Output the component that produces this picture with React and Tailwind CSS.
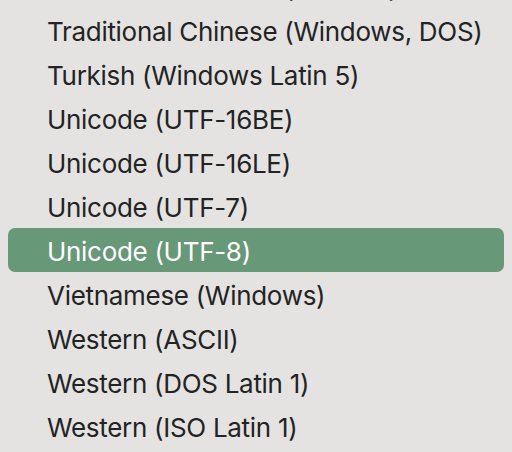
import React from 'react';

const items = [
  'Traditional Chinese (Mac OS)',
  'Traditional Chinese (Windows, DOS)',
  'Turkish (Windows Latin 5)',
  'Unicode (UTF-16BE)',
  'Unicode (UTF-16LE)',
  'Unicode (UTF-7)',
  'Unicode (UTF-8)',
  'Vietnamese (Windows)',
  'Western (ASCII)',
  'Western (DOS Latin 1)',
  'Western (ISO Latin 1)',
];

const selected = 'Unicode (UTF-8)';

export default function App() {
  return (
    <div
      className="h-[452px] w-[512px] overflow-hidden bg-[#e4e3e2]"
      style={{ fontFamily: 'Inter, "Noto Sans", sans-serif' }}
    >
      <div className="-mt-[36px] flex flex-col px-[8px]">
        {items.map((label) => {
          const active = label === selected;
          return (
            <div
              key={label}
              className={
                active
                  ? 'flex h-[44px] items-center rounded-[7px] bg-[#679877] pl-[39px] pt-[3px] text-[26px] leading-none tracking-[-0.3px] text-white'
                  : 'flex h-[44px] items-center pl-[39px] pt-[3px] text-[26px] leading-none tracking-[-0.3px] text-[#232323]'
              }
            >
              {label}
            </div>
          );
        })}
      </div>
    </div>
  );
}
